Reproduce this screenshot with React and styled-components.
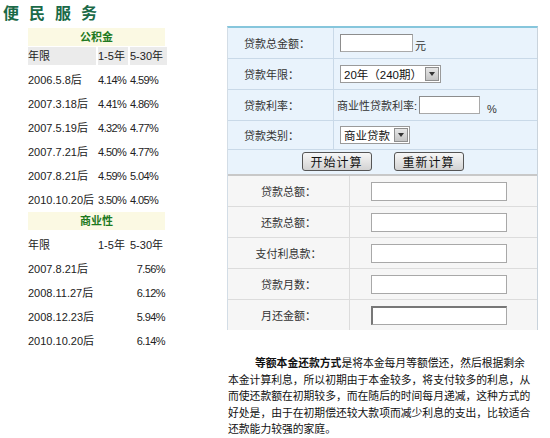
import styled, { createGlobalStyle } from 'styled-components';

const GlobalStyle = createGlobalStyle`
  body {
    margin: 0;
    background: #fff;
    font-family: "Liberation Sans", "Noto Sans CJK SC", sans-serif;
    font-size: 11px;
    color: #222;
  }
`;

const Page = styled.div`
  display: flex;
  width: 550px;
  height: 438px;
  overflow: hidden;
`;

const Side = styled.div`
  width: 227px;
  flex: none;
  padding: 3px 0 0 3px;
  box-sizing: border-box;
`;

const Title = styled.h2`
  margin: 0;
  font-size: 16px;
  line-height: 21px;
  letter-spacing: 10px;
  color: #1b6a48;
  font-weight: bold;
`;

const RateTable = styled.div`
  margin: 4px 0 0 25px;
  width: 137px;
  display: flex;
  flex-direction: column;
`;

const SectionHead = styled.div`
  height: 18px;
  line-height: 18px;
  margin-top: ${p => p.$gap || 0}px;
  background: #fbf9e3;
  color: #1f7a1f;
  font-weight: bold;
  text-align: center;
  font-size: 11px;
`;

const Row = styled.div`
  display: grid;
  grid-template-columns: 68px 30px 37px;
  column-gap: 2px;
  height: 18px;
  margin-top: ${p => p.$gap}px;
`;

const Cell = styled.div`
  line-height: 18px;
  white-space: nowrap;
  background: ${p => (p.$shade ? '#ebebeb' : 'transparent')};
  text-align: ${p => (p.$right ? 'right' : 'left')};
  padding-right: ${p => (p.$right ? '2px' : '0')};
  letter-spacing: ${p => (p.$num ? '-0.6px' : '0')};
  grid-column: ${p => p.$span || 'auto'};
`;

const Main = styled.div`
  flex: none;
  width: 323px;
`;

const Calc = styled.div`
  margin-top: 26px;
  width: 311px;
  border-top: 2px solid #86c6dc;
  border-left: 1px solid #d3dde6;
  border-right: 1px solid #c9d3dc;
  box-sizing: border-box;
`;

const Upper = styled.div`
  background: #e9f3fc;
`;

const InRow = styled.div`
  display: grid;
  grid-template-columns: 106px 1fr;
  height: ${p => p.$h}px;
  border-bottom: 1px solid #c9d9e8;
`;

const InLabel = styled.div`
  display: flex;
  align-items: center;
  padding-left: 16px;
  border-right: 1px solid #c9d9e8;
  color: #333;
`;

const InValue = styled.div`
  display: flex;
  align-items: center;
  padding-left: ${p => p.$pl ?? 6}px;
  gap: 2px;
  color: #333;
`;

const TextBox = styled.div`
  width: ${p => p.$w}px;
  height: 18px;
  box-sizing: border-box;
  background: #fff;
  border: 1px solid #a9a9a9;
  border-top-color: #8d8d8d;
  border-left-color: #8d8d8d;
`;

const Unit = styled.span`
  align-self: flex-end;
  margin-bottom: 5px;
  margin-left: ${p => p.$ml || 0}px;
`;

const Select = styled.div`
  width: ${p => p.$w}px;
  height: 18px;
  box-sizing: border-box;
  background: #fff;
  border: 1px solid #9a9a9a;
  display: flex;
  align-items: center;
  justify-content: space-between;
  padding-left: 3px;
  font-size: 11.5px;
  color: #111;
`;

const Arrow = styled.div`
  width: 14px;
  height: 14px;
  margin-right: 1px;
  box-sizing: border-box;
  background: linear-gradient(#e6e6e6, #c4c4c4);
  border: 1px solid #8e8e8e;
  display: flex;
  align-items: center;
  justify-content: center;
  &::after {
    content: '';
    border-left: 3px solid transparent;
    border-right: 3px solid transparent;
    border-top: 4px solid #333;
  }
`;

const ButtonRow = styled.div`
  height: 26px;
  display: flex;
  align-items: center;
  justify-content: center;
  gap: 22px;
  padding-bottom: 2px;
  box-sizing: border-box;
  border-bottom: 2px solid #c8c8c8;
`;

const Button = styled.button`
  width: 70px;
  height: 19px;
  padding: 0;
  border: 1px solid #555;
  border-radius: 3px;
  background: linear-gradient(#f7f7f7, #d2d2d2);
  font-family: inherit;
  font-size: 12px;
  letter-spacing: 1px;
  color: #111;
`;

const Lower = styled.div`
  background: #f6f6f6;
`;

const OutRow = styled.div`
  display: grid;
  grid-template-columns: 122px 1fr;
  height: 30px;
  border-bottom: 1px solid #dcdcdc;
  &:last-child {
    border-bottom: none;
  }
`;

const OutLabel = styled.div`
  display: flex;
  align-items: center;
  justify-content: center;
  border-right: 1px solid #dcdcdc;
  color: #333;
`;

const OutValue = styled.div`
  display: flex;
  align-items: center;
  padding-left: 21px;
`;

const OutBox = styled.div`
  width: 136px;
  height: 19px;
  box-sizing: border-box;
  background: #fff;
  border: 1px solid #a8a8a8;
  ${p => p.$inset && 'border-top: 2px solid #777; border-left: 2px solid #777;'}
`;

const Note = styled.div`
  margin: 24px 0 0 1px;
  width: 306px;
  font-family: "Noto Sans CJK SC", sans-serif;
  font-size: 10.8px;
  line-height: 16.6px;
  color: #111;
  b {
    font-weight: bold;
  }
`;

const NoteLine = styled.div`
  white-space: nowrap;
  padding-left: ${p => (p.$first ? 27 : 0)}px;
`;

const gongji = [
  ['2006.5.8后', '4.14%', '4.59%'],
  ['2007.3.18后', '4.41%', '4.86%'],
  ['2007.5.19后', '4.32%', '4.77%'],
  ['2007.7.21后', '4.50%', '4.77%'],
  ['2007.8.21后', '4.59%', '5.04%'],
  ['2010.10.20后', '3.50%', '4.05%'],
];

const shangye = [
  ['2007.8.21后', '7.56%'],
  ['2008.11.27后', '6.12%'],
  ['2008.12.23后', '5.94%'],
  ['2010.10.20后', '6.14%'],
];

const results = ['贷款总额：', '还款总额：', '支付利息款：', '贷款月数：', '月还金额：'];

export default function App() {
  return (
    <Page>
      <GlobalStyle />
      <Side>
        <Title>便民服务</Title>
        <RateTable>
          <SectionHead>公积金</SectionHead>
          <Row $gap={1}>
            <Cell $shade>年限</Cell>
            <Cell $shade>1-5年</Cell>
            <Cell $shade>5-30年</Cell>
          </Row>
          {gongji.map(([d, a, b]) => (
            <Row key={d} $gap={6}>
              <Cell>{d}</Cell>
              <Cell $num>{a}</Cell>
              <Cell $num>{b}</Cell>
            </Row>
          ))}
          <SectionHead $gap={3}>商业性</SectionHead>
          <Row $gap={6}>
            <Cell>年限</Cell>
            <Cell>1-5年</Cell>
            <Cell>5-30年</Cell>
          </Row>
          {shangye.map(([d, r]) => (
            <Row key={d} $gap={6}>
              <Cell>{d}</Cell>
              <Cell $span="2 / 4" $right $num>{r}</Cell>
            </Row>
          ))}
        </RateTable>
      </Side>
      <Main>
        <Calc>
          <Upper>
            <InRow $h={30}>
              <InLabel>贷款总金额：</InLabel>
              <InValue>
                <TextBox $w={73} />
                <Unit>元</Unit>
              </InValue>
            </InRow>
            <InRow $h={30}>
              <InLabel>贷款年限：</InLabel>
              <InValue>
                <Select $w={101}>
                  20年（240期）
                  <Arrow />
                </Select>
              </InValue>
            </InRow>
            <InRow $h={30}>
              <InLabel>贷款利率：</InLabel>
              <InValue $pl={3}>
                <span>商业性贷款利率:</span>
                <TextBox $w={61} />
                <Unit $ml={5}>%</Unit>
              </InValue>
            </InRow>
            <InRow $h={28}>
              <InLabel>贷款类别：</InLabel>
              <InValue>
                <Select $w={70}>
                  商业贷款
                  <Arrow />
                </Select>
              </InValue>
            </InRow>
            <ButtonRow>
              <Button>开始计算</Button>
              <Button>重新计算</Button>
            </ButtonRow>
          </Upper>
          <Lower>
            {results.map((r, i) => (
              <OutRow key={r}>
                <OutLabel>{r}</OutLabel>
                <OutValue>
                  <OutBox $inset={i === results.length - 1} />
                </OutValue>
              </OutRow>
            ))}
          </Lower>
        </Calc>
        <Note>
          <NoteLine $first>
            <b>等额本金还款方式</b>是将本金每月等额偿还，然后根据剩余
          </NoteLine>
          <NoteLine>本金计算利息，所以初期由于本金较多，将支付较多的利息，从</NoteLine>
          <NoteLine>而使还款额在初期较多，而在随后的时间每月递减，这种方式的</NoteLine>
          <NoteLine>好处是，由于在初期偿还较大款项而减少利息的支出，比较适合</NoteLine>
          <NoteLine>还款能力较强的家庭。</NoteLine>
        </Note>
      </Main>
    </Page>
  );
}
